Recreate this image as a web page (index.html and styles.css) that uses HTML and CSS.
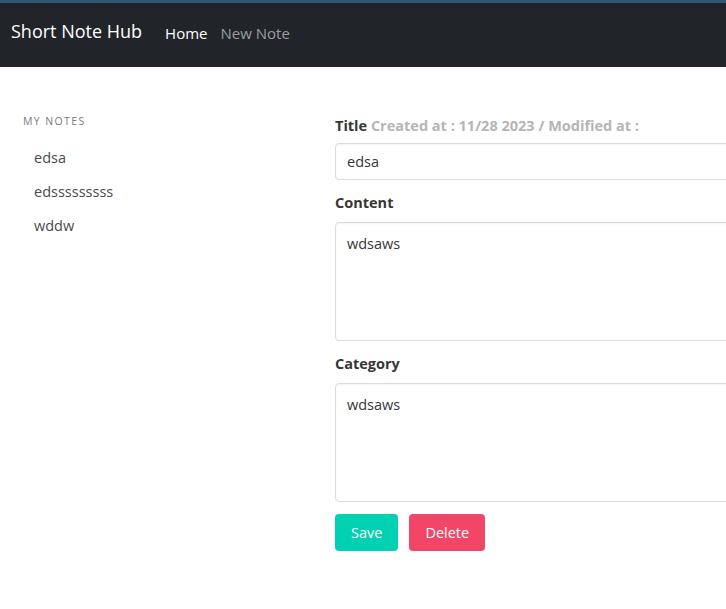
FILE: index.html
```html
<!DOCTYPE html>
<html>
<head>
<meta charset="utf-8">
<link rel="stylesheet" href="styles.css">
</head>
<body>
<div class="topstrip"></div>
<nav class="navbar">
  <span class="brand">Short Note Hub</span>
  <a class="nav-link active">Home</a>
  <a class="nav-link">New Note</a>
</nav>
<div class="layout">
  <aside class="sidebar">
    <p class="menu-label">My Notes</p>
    <ul class="menu-list">
      <li><a>edsa</a></li>
      <li><a>edsssssssss</a></li>
      <li><a>wddw</a></li>
    </ul>
  </aside>
  <main class="main">
    <div class="field">
      <label class="label label-title">Title <span class="meta">Created at : 11/28 2023 / Modified at :</span></label>
      <input class="input" type="text" value="edsa">
    </div>
    <div class="field">
      <label class="label">Content</label>
      <textarea class="textarea">wdsaws</textarea>
    </div>
    <div class="field">
      <label class="label">Category</label>
      <textarea class="textarea">wdsaws</textarea>
    </div>
    <div class="buttons">
      <button class="button save">Save</button>
      <button class="button delete">Delete</button>
    </div>
  </main>
</div>
</body>
</html>
```
FILE: styles.css
```css
html, body {
  margin: 0;
  padding: 0;
  overflow: hidden;
  background: #fff;
  font-family: "Open Sans", "Noto Sans", sans-serif;
}
.topstrip {
  height: 3px;
  background: #2e5b72;
}
.navbar {
  height: 64px;
  background: #212529;
  display: flex;
  align-items: center;
  padding-left: 11px;
}
.brand {
  color: #fff;
  font-size: 18px;
  margin-right: 23px;
  margin-top: -8px;
}
.nav-link {
  color: #9a9da1;
  font-size: 15px;
  margin-right: 13px;
  margin-top: -4px;
}
.nav-link.active {
  color: #fff;
}
.layout {
  display: flex;
  padding-top: 48px;
}
.sidebar {
  width: 312px;
  padding-left: 23px;
  flex: none;
}
.menu-label {
  margin: -1px 0 12px;
  font-size: 10.5px;
  letter-spacing: 1.4px;
  text-transform: uppercase;
  color: #7a7a7a;
  line-height: 14px;
}
.menu-list {
  list-style: none;
  margin: 0;
  padding: 0;
}
.menu-list a {
  display: block;
  padding: 7.5px 11px;
  font-size: 14.5px;
  line-height: 19px;
  color: #4a4a4a;
}
.main {
  width: 430px;
  flex: none;
}
.field {
  margin-bottom: 12px;
}
.label {
  display: block;
  font-size: 14.5px;
  font-weight: 700;
  color: #363636;
  line-height: 22px;
  margin-bottom: 8px;
}
.label-title {
  margin-bottom: 6px;
}
.meta {
  color: #b5b5b5;
}
.input, .textarea {
  display: block;
  box-sizing: border-box;
  width: 100%;
  border: 1px solid #dbdbdb;
  border-radius: 4px;
  font-family: inherit;
  font-size: 14.5px;
  color: #363636;
  padding: 0 11px;
  margin: 0;
  outline: none;
  background: #fff;
  box-shadow: inset 0 1px 2px rgba(10,10,10,0.05);
}
.input {
  height: 37px;
}
.textarea {
  height: 119px;
  padding-top: 10px;
  line-height: 22px;
  resize: none;
}
.buttons {
  display: flex;
  gap: 11px;
}
.button {
  height: 37px;
  border: none;
  border-radius: 4px;
  color: #fff;
  font-family: inherit;
  font-size: 14.5px;
  padding: 0 16px;
}
.save {
  background: #00d1b2;
}
.delete {
  background: #f14668;
}
```
